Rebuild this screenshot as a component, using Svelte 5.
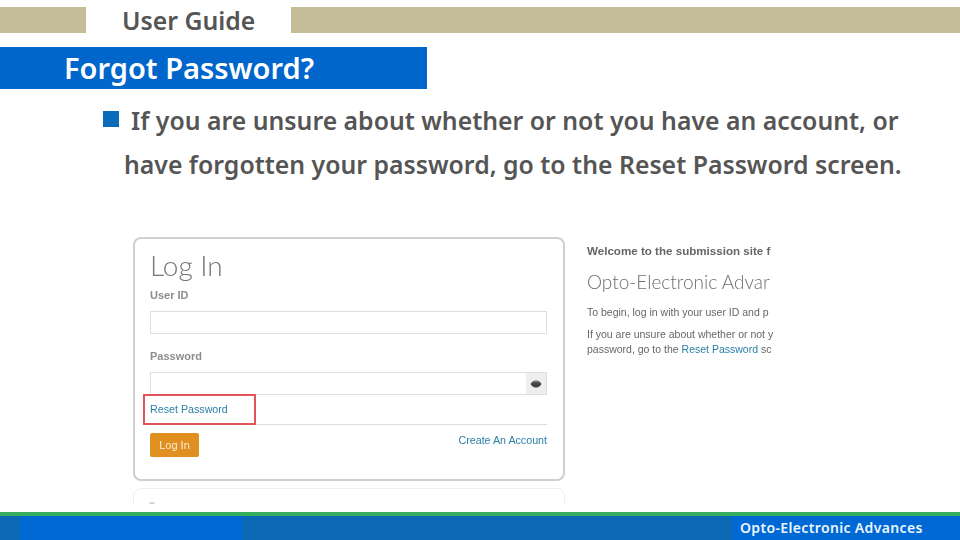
<script>
  const topBar = 'User Guide';
</script>

<div class="slide">
  <header class="top">
    <div class="tan left"></div>
    <div class="guide">{topBar}</div>
    <div class="tan right"></div>
  </header>

  <h1 class="title">Forgot Password?</h1>

  <div class="copy">
    <p class="line first"><span class="square"></span>If you are unsure about whether or not you have an account, or</p>
    <p class="line second">have forgotten your password, go to the Reset Password screen.</p>
  </div>

  <div class="shot">
    <div class="forms">
      <section class="card">
        <div class="login-title">Log In</div>
        <div class="label user">User ID</div>
        <div class="input"></div>
        <div class="label pass">Password</div>
        <div class="input with-eye">
          <span class="eye">
            <svg width="12" height="8" viewBox="0 0 12 8"><path d="M0.5 4C2 1.4 4 .4 6 .4S10 1.4 11.5 4C10 6.6 8 7.6 6 7.6S2 6.6 .5 4Z" fill="#444"/><path d="M3.2 2.4C4.6 1.5 7.4 1.5 8.8 2.4" stroke="#aaa" stroke-width=".8" fill="none"/></svg>
          </span>
        </div>
        <div class="reset-row">
          <a class="link reset">Reset Password</a>
          <span class="redbox"></span>
        </div>
        <div class="actions">
          <span class="btn">Log In</span>
          <a class="link create">Create An Account</a>
        </div>
      </section>
      <section class="card2"><span class="dot"></span></section>
    </div>
    <aside class="welcome">
      <div class="w-head">Welcome to the submission site f</div>
      <div class="w-title">Opto-Electronic Advar</div>
      <p class="w-p one">To begin, log in with your user ID and p</p>
      <p class="w-p two">If you are unsure about whether or not y<br />password, go to the <a class="blue">Reset Password</a> sc</p>
    </aside>
  </div>

  <footer class="foot">
    <div class="seg a"></div>
    <div class="seg b"></div>
    <div class="seg c"></div>
    <div class="seg d">Opto-Electronic Advances</div>
  </footer>
</div>

<style>
  :global(body) { margin: 0; background: #fff; }
  .slide {
    width: 960px; height: 540px; overflow: hidden; background: #fff;
    display: flex; flex-direction: column;
    font-family: "Noto Sans", "Open Sans", sans-serif;
    color: #555;
  }
  .top { display: flex; height: 26px; margin-top: 7px; flex: none; }
  .tan { background: #c5bc98; }
  .left { width: 86px; }
  .right { flex: 1; }
  .guide {
    width: 205px; padding-left: 36px; box-sizing: border-box;
    font-size: 24.8px; font-weight: 600; line-height: 27px; color: #555; white-space: nowrap;
  }
  .title {
    margin: 14px 0 0; width: 427px; height: 42px; box-sizing: border-box; flex: none;
    background: #0066cc; color: #fff; padding-left: 64px;
    font-size: 29px; font-weight: 600; line-height: 41px; white-space: nowrap;
  }
  .copy { margin-top: 9px; flex: none; }
  .line { margin: 0; font-size: 24.8px; font-weight: 600; line-height: 44px; white-space: nowrap; color: #555; }
  .first { padding-left: 103px; display: flex; align-items: center; }
  .second { padding-left: 124px; }
  .square { width: 16px; height: 16px; background: #0a6cb8; margin: 0 12px 2px 0; flex: none; }

  .shot {
    margin: 51px 0 0 133px; height: 267px; display: flex; flex: none; overflow: hidden;
    font-family: "Liberation Sans", Arial, sans-serif;
    filter: blur(0.35px);
  }
  .forms { width: 432px; flex: none; }
  .card {
    height: 244px; box-sizing: border-box; border: 2px solid #cfcfcf; border-radius: 8px;
    padding: 0 15px; position: relative;
  }
  .login-title { font-size: 28px; color: #777; font-family: "Lato", sans-serif; font-weight: 300; line-height: 32px; margin-top: 10px; }
  .label { font-size: 11px; font-weight: 700; color: #8d8d8d; line-height: 14px; }
  .user { margin-top: 7px; }
  .pass { margin-top: 15px; }
  .input { height: 23px; box-sizing: border-box; border: 1px solid #dedede; margin-top: 9px; position: relative; width: 397px; }
  .eye {
    position: absolute; right: 0; top: 0; width: 20px; height: 21px; background: #eee;
    display: flex; align-items: center; justify-content: center;
  }
  .reset-row { height: 30px; box-sizing: border-box; border-bottom: 1px solid #ddd; width: 397px; position: relative; }
  .link { font-size: 10.7px; color: #2a7fa8; line-height: 14px; }
  .reset { position: absolute; left: 0; top: 7px; }
  .redbox {
    position: absolute; left: -7px; top: -1px; width: 113px; height: 31px; border: 2px solid #e2545a; box-sizing: border-box;
  }
  .actions { display: flex; justify-content: space-between; width: 397px; margin-top: 8px; }
  .btn {
    width: 49px; height: 24px; background: #e09020; color: #fbeedc; border-radius: 2px;
    font-size: 11px; display: flex; align-items: center; justify-content: center;
  }
  .card2 {
    margin-top: 7px; height: 40px; border: 1px solid #eee; border-radius: 8px; position: relative;
  }
  .dot { position: absolute; left: 15px; top: 13px; width: 6px; height: 3px; background: #ccc; border-radius: 3px 3px 0 0; }

  .welcome { width: 186px; margin-left: 22px; overflow: hidden; white-space: nowrap; flex: none; color: #666; }
  .w-head { font-size: 11.6px; font-weight: 700; color: #666; line-height: 14px; margin-top: 7px; }
  .w-title { font-family: "Lato", sans-serif; font-size: 19px; font-weight: 300; color: #6f6f6f; line-height: 24px; margin-top: 12px; }
  .w-p { margin: 0; font-size: 10.5px; line-height: 15px; color: #666; }
  .one { margin-top: 11px; }
  .two { margin-top: 7px; }
  .blue { color: #2a7fa8; }

  .foot {
    margin-top: auto; height: 28px; box-sizing: border-box; border-top: 4px solid #35ad5c;
    display: flex; flex: none;
  }
  .seg { height: 24px; }
  .a { width: 20px; background: #0a68b4; }
  .b { width: 222px; background: #0068d2; }
  .c { width: 490px; background: #0a68b4; }
  .d {
    flex: 1; background: #0068d2; color: #eaf6ff; padding-left: 8px;
    font-size: 14px; font-weight: 600; line-height: 23px; letter-spacing: .35px; white-space: nowrap;
  }
</style>
